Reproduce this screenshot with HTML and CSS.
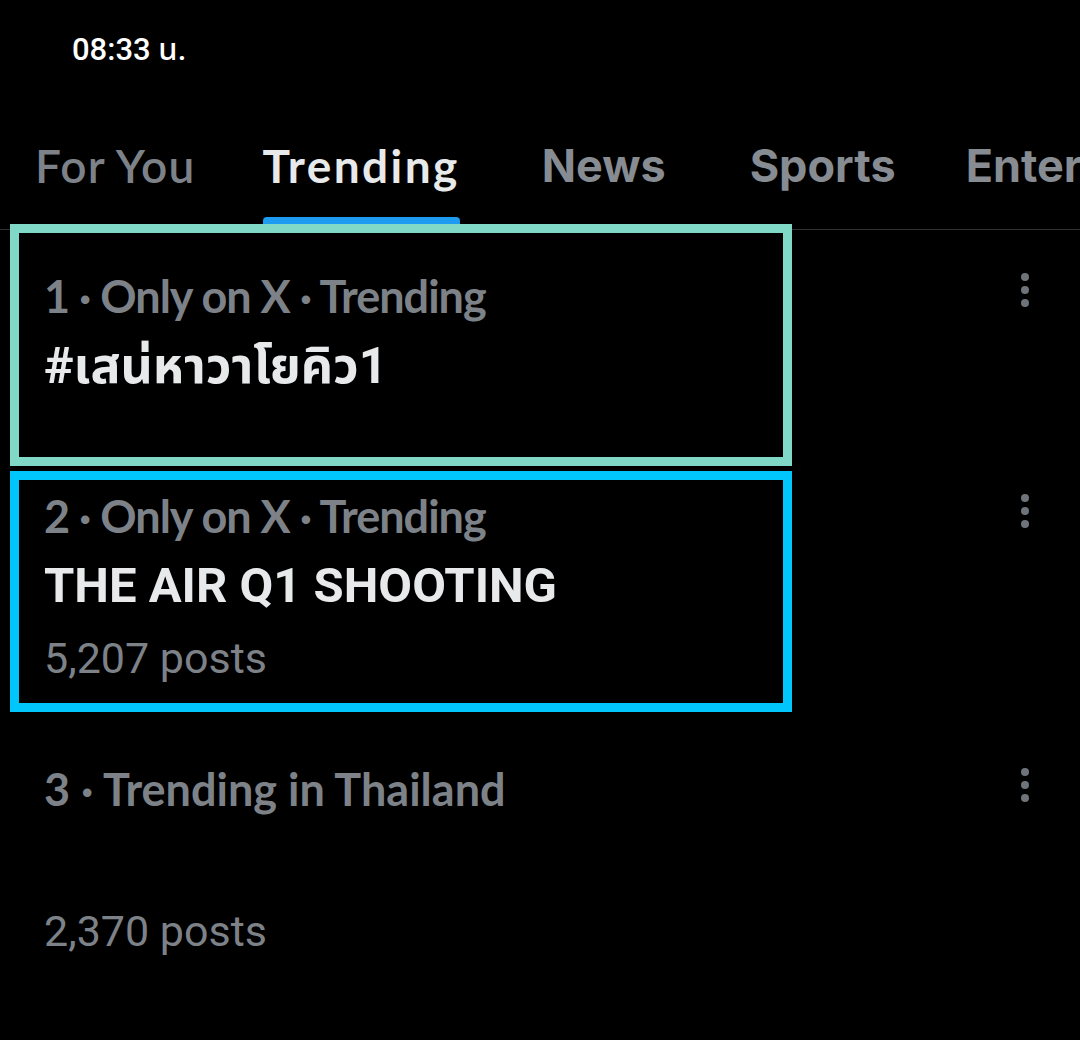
FILE: index.html
```html
<!doctype html>
<html>
    <head>
        <link rel="stylesheet" href="styles.css">
    </head>
    <body>
        <header class="status">
            <span class="clock">08:33 น.</span>
        </header>
        <nav class="tabs">
            <div class="tab tab-foryou">For You</div>
            <div class="tab tab-active">Trending</div>
            <div class="tab tab-plain tab-news">News</div>
            <div class="tab tab-plain tab-sports">Sports</div>
            <div class="tab tab-plain">Entertainment</div>
        </nav>
        <main class="trends">
            <section class="trend trend-1">
                <div class="box box-teal">
                    <p class="meta">1 · Only on X · Trending</p>
                    <h3 class="title title-thai">#เสน่หาวาโยคิว1</h3>
                </div>
                <svg class="more" width="10" height="36" viewBox="0 0 10 36">
                    <circle cx="5" cy="5" r="4" />
                    <circle cx="5" cy="18" r="4" />
                    <circle cx="5" cy="31" r="4" />
                </svg>
            </section>
            <section class="trend trend-2">
                <div class="box box-blue">
                    <p class="meta">2 · Only on X · Trending</p>
                    <h3 class="title">THE AIR Q1 SHOOTING</h3>
                    <p class="posts">5,207 posts</p>
                </div>
                <svg class="more" width="10" height="36" viewBox="0 0 10 36">
                    <circle cx="5" cy="5" r="4" />
                    <circle cx="5" cy="18" r="4" />
                    <circle cx="5" cy="31" r="4" />
                </svg>
            </section>
            <section class="trend trend-3">
                <div class="box">
                    <p class="meta meta-wide">3 · Trending in Thailand</p>
                    <h3 class="title"></h3>
                    <p class="posts">2,370 posts</p>
                </div>
                <svg class="more" width="10" height="36" viewBox="0 0 10 36">
                    <circle cx="5" cy="5" r="4" />
                    <circle cx="5" cy="18" r="4" />
                    <circle cx="5" cy="31" r="4" />
                </svg>
            </section>
        </main>
    </body>
</html>
```

FILE: styles.css
```css
* {
    margin: 0;
    padding: 0;
    box-sizing: border-box;
}
html,
body {
    height: 100%;
}
body {
    background: #000;
    color: #e7e9ea;
    font-family: Roboto, "Noto Sans Thai", "Tlwg Typo", "Garuda", "Noto Sans", sans-serif;
    overflow: hidden;
}
.status {
    height: 110px;
    padding: 29px 0 0 72px;
}
.clock {
    font-size: 31px;
    font-weight: 500;
    color: #fff;
    line-height: 42px;
}
.tabs {
    display: flex;
    gap: 70px;
    padding-left: 35px;
    height: 120px;
    border-bottom: 1px solid #2f3336;
    white-space: nowrap;
    overflow: hidden;
}
.tab {
    font-size: 46px;
    line-height: 112px;
    color: #7d8288;
    position: relative;
    height: 119px;
    flex-shrink: 0;
}
.tab-foryou {
    font-family: Lato, sans-serif;
    font-weight: 600;
    letter-spacing: 1.2px;
}
.tab-active {
    font-family: Lato, sans-serif;
    font-weight: 700;
    letter-spacing: 2.4px;
    margin-left: -3px;
    color: #e7e9ea;
}
.tab-active::after {
    content: "";
    position: absolute;
    left: 0;
    right: 0;
    bottom: 5px;
    height: 7px;
    border-radius: 4px 4px 0 0;
    background: #1d9bf0;
}
.tab-plain {
    font-family: Inter, sans-serif;
    font-weight: 700;
    font-size: 45px;
    color: #878c92;
}
.tab-news {
    margin-left: 12px;
}
.tab-sports {
    margin-left: 14px;
}
.trends {
    margin-top: -6px;
}
.trend {
    display: flex;
    justify-content: space-between;
    align-items: flex-start;
    padding: 0 50px 0 10px;
}
.trend-2 {
    margin-top: 5px;
}
.box {
    width: 782px;
    border: 9px solid transparent;
    padding: 0 0 0 25px;
}
.box-teal {
    border-color: #80d8c6;
    padding-top: 41px;
    height: 242px;
}
.box-blue {
    border-color: #00c6fb;
    padding-top: 14px;
    height: 241px;
}
.trend-3 .box {
    padding-top: 46px;
}
.meta {
    font-family: Lato, sans-serif;
    font-weight: 700;
    font-size: 45px;
    letter-spacing: -1px;
    line-height: 44px;
    color: #7d8288;
}
.meta-wide {
    letter-spacing: 0;
}
.title {
    margin-top: 22px;
    font-size: 49px;
    font-weight: 700;
    line-height: 52px;
    height: 52px;
    color: #e7e9ea;
}
.title-thai {
    font-size: 50px;
}
.posts {
    margin-top: 22px;
    font-size: 43px;
    line-height: 44px;
    color: #7d8288;
}
.posts:last-child {
    margin-top: 24px;
}
.more {
    fill: #6e7479;
}
.trend-1 .more {
    margin-top: 48px;
}
.trend-2 .more {
    margin-top: 22px;
}
.trend-3 .more {
    margin-top: 55px;
}
```
